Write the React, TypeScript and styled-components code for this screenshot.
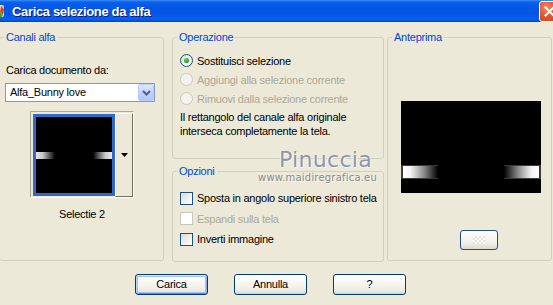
import React from "react";
import styled, { createGlobalStyle } from "styled-components";

const Global = createGlobalStyle`
  html, body { margin: 0; padding: 0; background: #ECE9D8; }
  body {
    width: 553px; height: 305px; overflow: hidden;
    font-family: "Liberation Sans", Arial, sans-serif;
    font-size: 11px; letter-spacing: -0.25px; color: #000;
  }
  #root { width: 553px; height: 305px; }
  * { box-sizing: border-box; }
`;

const Window = styled.div`
  position: relative;
  width: 553px;
  height: 305px;
  display: flex;
  flex-direction: column;
  background: #ECE9D8;
  overflow: hidden;
`;

const TitleBar = styled.div`
  height: 22px;
  flex: none;
  display: flex;
  align-items: center;
  background: linear-gradient(
    to bottom,
    #3d8ff8 0px,
    #0b5fea 2px,
    #0357e6 8px,
    #0554e3 14px,
    #0862ee 19px,
    #0450d8 21px,
    #0040b8 22px
  );
`;

const TitleIcon = styled.svg`
  flex: none;
  width: 16px;
  height: 16px;
  margin-left: -11px;
`;

const TitleText = styled.span`
  margin-left: 7px;
  color: #fff;
  font-weight: bold;
  font-size: 13px;
  letter-spacing: -0.35px;
  text-shadow: 1px 1px 0 #0a1883;
`;

const CloseButton = styled.div`
  margin-left: auto;
  margin-right: -7px;
  width: 21px;
  height: 21px;
  border: 1px solid #fff;
  border-radius: 3px;
  background: radial-gradient(circle at 35% 30%, #f08a6a 0%, #e2582f 45%, #c63e1c 100%);
  display: flex;
  align-items: center;
  justify-content: center;
`;

const Main = styled.div`
  height: 240px;
  flex: none;
  display: flex;
  align-items: flex-start;
  padding-top: 15px;
`;

const Group = styled.div<{ $w: number; $h: number; $ml: number; $pt: number; $pl: number }>`
  position: relative;
  flex: none;
  width: ${(p) => p.$w}px;
  height: ${(p) => p.$h}px;
  margin-left: ${(p) => p.$ml}px;
  padding-top: ${(p) => p.$pt}px;
  padding-left: ${(p) => p.$pl}px;
  border: 1px solid #d0d0bf;
  border-radius: 3px;
`;

const Legend = styled.span`
  position: absolute;
  top: -7px;
  left: 4px;
  padding: 0 2px;
  line-height: 13px;
  background: #ece9d8;
  color: #0046d5;
`;

const Column = styled.div`
  display: flex;
  flex-direction: column;
  gap: 12px;
  margin-left: 8px;
`;

const Label = styled.div`
  line-height: 13px;
  padding-left: 1px;
`;

const Combo = styled.div`
  margin-top: 6px;
  width: 150px;
  height: 19px;
  border: 1px solid #7f9db9;
  background: #fff;
  display: flex;
  align-items: center;
`;

const ComboText = styled.span`
  flex: 1;
  padding-left: 4px;
  line-height: 13px;
`;

const ComboButton = styled.div`
  width: 16px;
  height: 17px;
  border: 1px solid #b9cafb;
  border-radius: 2px;
  background: linear-gradient(to bottom, #dde7fe 0%, #c1d3fb 50%, #b2c7f8 100%);
  display: flex;
  align-items: center;
  justify-content: center;
`;

const ThumbBlock = styled.div`
  margin-left: 25px;
  margin-top: 9px;
  width: 104px;
  display: flex;
  flex-direction: column;
  align-items: center;
`;

const Thumb = styled.div`
  width: 104px;
  height: 87px;
  border: 1px solid;
  border-color: #aca899 #ffffff #ffffff #aca899;
  padding: 1px 0 0 2px;
  display: flex;
`;

const ThumbImage = styled.div`
  width: 82px;
  height: 82px;
  margin-top: 1px;
  border: 3px solid #316ac5;
  background: #000;
  display: flex;
`;

const ThumbStrip = styled.div`
  flex: 1;
  height: 84px;
  border: 1px solid;
  border-color: #ffffff #716f64 #716f64 #ffffff;
  display: flex;
  align-items: center;
  justify-content: center;
`;

const Caption = styled.div`
  margin-top: 10px;
  line-height: 13px;
`;

const OptionRow = styled.div<{ $h: number; $disabled?: boolean }>`
  height: ${(p) => p.$h}px;
  display: flex;
  align-items: center;
  gap: 4px;
  color: ${(p) => (p.$disabled ? "#aca899" : "#000")};
`;

const Radio = styled.span<{ $checked?: boolean; $disabled?: boolean }>`
  position: relative;
  flex: none;
  width: 13px;
  height: 13px;
  border-radius: 50%;
  border: 1px solid ${(p) => (p.$disabled ? "#cac8bb" : "#1c5180")};
  background: ${(p) =>
    p.$disabled ? "#f4f3ee" : "linear-gradient(135deg, #dcdcd7 0%, #f4f4f0 60%, #ffffff 100%)"};
  &::after {
    content: "";
    display: ${(p) => (p.$checked ? "block" : "none")};
    position: absolute;
    left: 3px;
    top: 3px;
    width: 5px;
    height: 5px;
    border-radius: 50%;
    background: radial-gradient(circle at 40% 35%, #5ee05e 0%, #21a121 60%, #1a7f1a 100%);
  }
`;

const Check = styled.span<{ $disabled?: boolean }>`
  flex: none;
  width: 13px;
  height: 13px;
  border: 1px solid ${(p) => (p.$disabled ? "#cac8bb" : "#1c5180")};
  background: ${(p) =>
    p.$disabled ? "#ffffff" : "linear-gradient(135deg, #dcdcd7 0%, #f0f0ea 55%, #ffffff 100%)"};
`;

const Note = styled.div`
  margin-top: 2px;
  line-height: 14px;
`;

const Preview = styled.div`
  width: 140px;
  height: 92px;
  background: #000;
  display: flex;
`;

const SmallButton = styled.div`
  margin-top: 37px;
  margin-left: 59px;
  width: 38px;
  height: 20px;
  border: 1px solid #1f4f86;
  border-radius: 3px;
  background: linear-gradient(to bottom, #ffffff 0%, #f3f2ec 60%, #dedbd0 100%);
  display: flex;
  align-items: center;
  justify-content: center;
`;

const Checker = styled.span`
  width: 12px;
  height: 8px;
  background-color: #ffffff;
  background-image: linear-gradient(45deg, #e4e2da 25%, transparent 25%, transparent 75%, #e4e2da 75%),
    linear-gradient(45deg, #e4e2da 25%, transparent 25%, transparent 75%, #e4e2da 75%);
  background-size: 4px 4px;
  background-position: 0 0, 2px 2px;
`;

const Footer = styled.div`
  display: flex;
  gap: 26px;
  padding-top: 12px;
  padding-left: 135px;
`;

const Button = styled.div<{ $default?: boolean }>`
  width: 73px;
  height: 21px;
  border: 1px solid #003c74;
  border-radius: 3px;
  background: linear-gradient(to bottom, #ffffff 0%, #f4f3ee 55%, #ebe9e0 85%, #d6d0c5 100%);
  display: flex;
  align-items: center;
  justify-content: center;
  line-height: 13px;
  box-shadow: ${(p) =>
    p.$default
      ? "inset 0 1px 0 #cee7ff, inset 1px 0 0 #bcd4f6, inset -1px 0 0 #89ade4, inset 0 -1px 0 #6982ee, inset 0 0 0 2px #a8c2f2"
      : "none"};
`;

const Watermark = styled.div`
  position: absolute;
  left: 252px;
  top: 148px;
  width: 125px;
  display: flex;
  flex-direction: column;
  align-items: flex-end;
  pointer-events: none;
`;

const WmName = styled.span`
  font-family: "DejaVu Sans", sans-serif;
  font-size: 22px;
  line-height: 24px;
  letter-spacing: 0.3px;
  color: #9195a9;
  text-shadow: 1px 1px 0 #f6f5ef, -1px 0 0 #f6f5ef;
  margin-right: 5px;
`;

const WmUrl = styled.span`
  font-family: "DejaVu Sans", sans-serif;
  font-size: 10px;
  line-height: 12px;
  letter-spacing: 0.2px;
  color: #8a8a8a;
  text-shadow: 1px 1px 0 #f6f5ef;
`;

const ThumbPicture = () => (
  <svg width="76" height="76" viewBox="0 0 76 76">
    <defs>
      <linearGradient id="tl" x1="0" x2="1" y1="0" y2="0">
        <stop offset="0" stopColor="#e8e8e8" />
        <stop offset="0.35" stopColor="#c8c8c8" />
        <stop offset="1" stopColor="#000" />
      </linearGradient>
      <linearGradient id="tr" x1="0" x2="1" y1="0" y2="0">
        <stop offset="0" stopColor="#000" />
        <stop offset="0.65" stopColor="#c8c8c8" />
        <stop offset="1" stopColor="#e8e8e8" />
      </linearGradient>
    </defs>
    <rect x="0" y="35" width="19" height="7" fill="url(#tl)" />
    <rect x="57" y="35" width="19" height="7" fill="url(#tr)" />
  </svg>
);

const PreviewPicture = () => (
  <svg width="140" height="92" viewBox="0 0 140 92">
    <defs>
      <linearGradient id="pl" x1="0" x2="1" y1="0" y2="0">
        <stop offset="0" stopColor="#ffffff" />
        <stop offset="0.22" stopColor="#f2f2f2" />
        <stop offset="0.6" stopColor="#8a8a8a" />
        <stop offset="1" stopColor="#000" />
      </linearGradient>
      <linearGradient id="pr" x1="0" x2="1" y1="0" y2="0">
        <stop offset="0" stopColor="#000" />
        <stop offset="0.4" stopColor="#8a8a8a" />
        <stop offset="0.78" stopColor="#f2f2f2" />
        <stop offset="1" stopColor="#ffffff" />
      </linearGradient>
    </defs>
    <rect x="0" y="64" width="37" height="14" fill="#3a3a3a" />
    <rect x="103" y="64" width="37" height="14" fill="#3a3a3a" />
    <rect x="2" y="65" width="35" height="12" fill="url(#pl)" />
    <rect x="103" y="65" width="35" height="12" fill="url(#pr)" />
  </svg>
);

const options = [
  { label: "Sostituisci selezione", checked: true, disabled: false },
  { label: "Aggiungi alla selezione corrente", checked: false, disabled: true },
  { label: "Rimuovi dalla selezione corrente", checked: false, disabled: true },
];

const checks = [
  { label: "Sposta in angolo superiore sinistro tela", disabled: false },
  { label: "Espandi sulla tela", disabled: true },
  { label: "Inverti immagine", disabled: false },
];

export default function App() {
  return (
    <Window>
      <Global />
      <TitleBar>
        <TitleIcon viewBox="0 0 16 16">
          <rect x="1" y="2" width="14" height="12" rx="2" fill="#f4e7b8" />
          <path d="M12 3 L15 6 L14 12 L11 9 Z" fill="#d8452b" />
          <path d="M11 9 L14 12 L12 15 L10 12 Z" fill="#3aa935" />
          <path d="M12 3 L13 2 L15 4 L15 6 Z" fill="#f3c21d" />
        </TitleIcon>
        <TitleText>Carica selezione da alfa</TitleText>
        <CloseButton>
          <svg width="11" height="11" viewBox="0 0 11 11">
            <path d="M1.5 1.5 L9.5 9.5 M9.5 1.5 L1.5 9.5" stroke="#fff" strokeWidth="2" strokeLinecap="square" />
          </svg>
        </CloseButton>
      </TitleBar>

      <Main>
        <Group $w={165} $h={224} $ml={-1} $pt={26} $pl={5}>
          <Legend>Canali alfa</Legend>
          <Label>Carica documento da:</Label>
          <Combo>
            <ComboText>Alfa_Bunny love</ComboText>
            <ComboButton>
              <svg width="9" height="6" viewBox="0 0 9 6">
                <path d="M1 1 L4.5 4.5 L8 1" fill="none" stroke="#4d6185" strokeWidth="2" />
              </svg>
            </ComboButton>
          </Combo>
          <ThumbBlock>
            <Thumb>
              <ThumbImage>
                <ThumbPicture />
              </ThumbImage>
              <ThumbStrip>
                <svg width="7" height="4" viewBox="0 0 7 4">
                  <path d="M0 0 H7 L3.5 4 Z" fill="#000" />
                </svg>
              </ThumbStrip>
            </Thumb>
            <Caption>Selectie 2</Caption>
          </ThumbBlock>
        </Group>

        <Column>
          <Group $w={212} $h={122} $ml={0} $pt={13} $pl={7}>
            <Legend>Operazione</Legend>
            {options.map((o) => (
              <OptionRow key={o.label} $h={19} $disabled={o.disabled}>
                <Radio $checked={o.checked} $disabled={o.disabled} />
                <span>{o.label}</span>
              </OptionRow>
            ))}
            <Note>
              Il rettangolo del canale alfa originale
              <br />
              interseca completamente la tela.
            </Note>
          </Group>
          <Group $w={212} $h={91} $ml={0} $pt={16} $pl={7}>
            <Legend>Opzioni</Legend>
            {checks.map((c) => (
              <OptionRow key={c.label} $h={20.5} $disabled={c.disabled}>
                <Check $disabled={c.disabled} />
                <span>{c.label}</span>
              </OptionRow>
            ))}
          </Group>
        </Column>

        <Group $w={165} $h={224} $ml={3} $pt={63} $pl={13}>
          <Legend>Anteprima</Legend>
          <Preview>
            <PreviewPicture />
          </Preview>
          <SmallButton>
            <Checker />
          </SmallButton>
        </Group>
      </Main>

      <Footer>
        <Button $default>Carica</Button>
        <Button>Annulla</Button>
        <Button>?</Button>
      </Footer>

      <Watermark>
        <WmName>Pinuccia</WmName>
        <WmUrl>www.maidiregrafica.eu</WmUrl>
      </Watermark>
    </Window>
  );
}
